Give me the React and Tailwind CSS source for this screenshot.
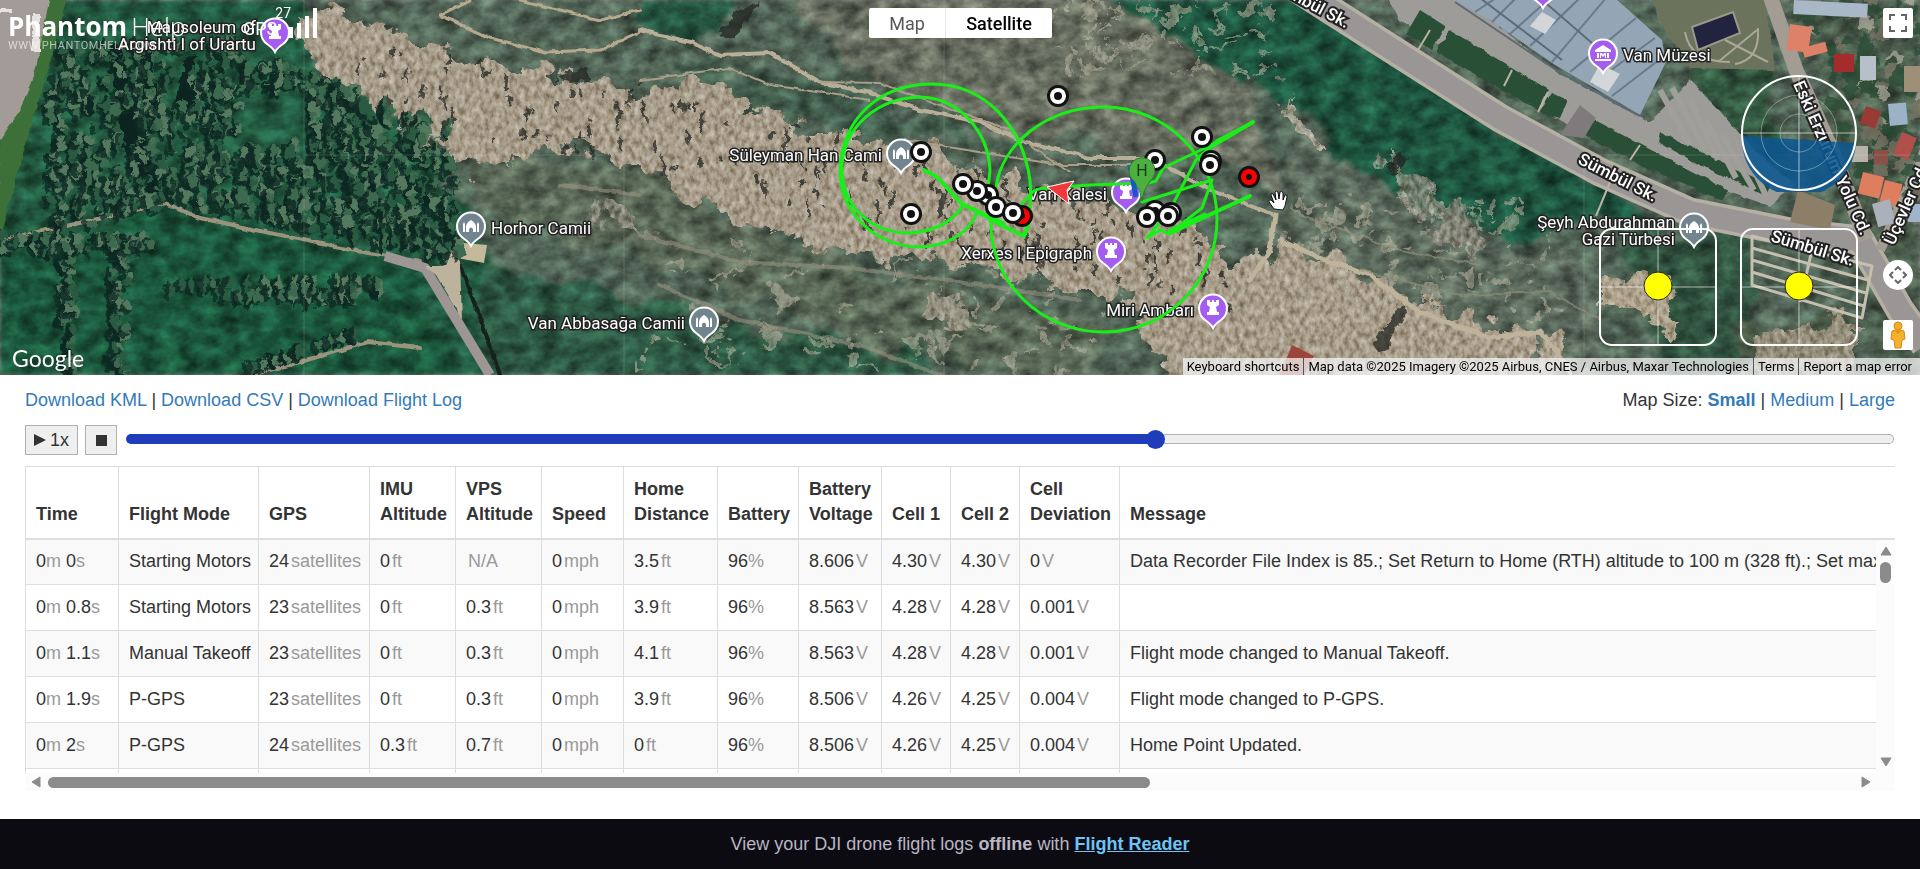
import React, { useState } from 'react';

const COLUMNS = [
  { label: 'Time', width: 'w-[93px]' },
  { label: 'Flight Mode', width: 'w-[140px]' },
  { label: 'GPS', width: 'w-[111px]' },
  { label: 'IMU Altitude', width: 'w-[86px]' },
  { label: 'VPS Altitude', width: 'w-[86px]' },
  { label: 'Speed', width: 'w-[82px]' },
  { label: 'Home Distance', width: 'w-[94px]' },
  { label: 'Battery', width: 'w-[81px]' },
  { label: 'Battery Voltage', width: 'w-[83px]' },
  { label: 'Cell 1', width: 'w-[69px]' },
  { label: 'Cell 2', width: 'w-[69px]' },
  { label: 'Cell Deviation', width: 'w-[100px]' },
  { label: 'Message', width: '' },
];

const ROWS = [
  { s: '0', mode: 'Starting Motors', sats: 24, imu: '0', vps: null, dist: '3.5', volt: '8.606', c1: '4.30', c2: '4.30', dev: '0', msg: 'Data Recorder File Index is 85.; Set Return to Home (RTH) altitude to 100 m (328 ft).; Set maximum' },
  { s: '0.8', mode: 'Starting Motors', sats: 23, imu: '0', vps: '0.3', dist: '3.9', volt: '8.563', c1: '4.28', c2: '4.28', dev: '0.001', msg: '' },
  { s: '1.1', mode: 'Manual Takeoff', sats: 23, imu: '0', vps: '0.3', dist: '4.1', volt: '8.563', c1: '4.28', c2: '4.28', dev: '0.001', msg: 'Flight mode changed to Manual Takeoff.' },
  { s: '1.9', mode: 'P-GPS', sats: 23, imu: '0', vps: '0.3', dist: '3.9', volt: '8.506', c1: '4.26', c2: '4.25', dev: '0.004', msg: 'Flight mode changed to P-GPS.' },
  { s: '2', mode: 'P-GPS', sats: 24, imu: '0.3', vps: '0.7', dist: '0', volt: '8.506', c1: '4.26', c2: '4.25', dev: '0.004', msg: 'Home Point Updated.' },
];

const PLACES = [
  { lines: ['Mausoleum of', 'Argishti I of Urartu'], x: 275, y: 32, side: 'left', kind: 'castle' },
  { lines: ['Horhor Camii'], x: 471, y: 226, side: 'right', kind: 'mosque' },
  { lines: ['Van Abbasağa Camii'], x: 704, y: 321, side: 'left', kind: 'mosque' },
  { lines: ['Süleyman Han Cami'], x: 901, y: 153, side: 'left', kind: 'mosque' },
  { lines: ['Xerxes I Epigraph'], x: 1111, y: 251, side: 'left', kind: 'castle' },
  { lines: ['Miri Ambarı'], x: 1213, y: 308, side: 'left', kind: 'castle' },
  { lines: ['Van Kalesi'], x: 1126, y: 192, side: 'left', kind: 'castle' },
  { lines: ['Van Müzesi'], x: 1603, y: 53, side: 'right', kind: 'museum' },
  { lines: [], x: 1543, y: -12, side: 'right', kind: 'museum' },
  { lines: ['Şeyh Abdurahman', 'Gazi Türbesi'], x: 1694, y: 227, side: 'left', kind: 'mosque' },
];

const WAYPOINTS = [
  [1058, 96], [921, 152], [911, 214], [988, 195], [977, 191], [963, 184], [996, 207],
  [1022, 216, true], [1013, 213], [1155, 160], [1202, 137], [1211, 161], [1210, 165],
  [1249, 177, true], [1155, 211], [1147, 217], [1171, 213], [1168, 216],
];

// Small seeded generator so the tree cover is the same on every render
const scatter = (seed, count, place) => {
  let n = seed;
  const rnd = () => {
    n = (n * 16807) % 2147483647;
    return n / 2147483647;
  };
  return Array.from({ length: count }, () => place(rnd));
};

const FOREST = scatter(71, 900, (r) => {
  const x = 50 + r() * 410;
  const top = x < 250 ? 42 : 50 + (x - 250) * 0.38;
  const bottom = x < 165 ? 235 - (x - 50) * 0.25 : 200 + (x - 165) * 0.2;
  const y = top + r() * (bottom - top);
  return { x, y, rx: 3 + r() * 3, ry: 4 + r() * 7, tone: r() };
}).filter((t) => t.x + t.y * 0.35 > 80 && !(t.x > 240 && t.x < 310 && t.y > 90 && t.y < 145));

const HEDGES = [
  ...scatter(12, 60, (r) => ({ x: 172 + r() * 212, y: 280 + r() * 18, rx: 4, ry: 9, tone: r() })),
  ...scatter(33, 50, (r) => ({ x: 62 + r() * 14, y: 245 + r() * 130, rx: 5, ry: 7, tone: r() })),
  ...scatter(45, 50, (r) => ({ x: 112 + r() * 18, y: 235 + r() * 140, rx: 5, ry: 7, tone: r() })),
  ...scatter(58, 36, (r) => { const k = r(); return { x: 250 + k * 110, y: 368 - k * 36, rx: 4, ry: 8, tone: r() }; }),
  ...scatter(91, 50, (r) => ({ x: r() * 160, y: 236 + r() * 14, rx: 5, ry: 8, tone: r() })),
];

const CREVICES = scatter(204, 190, (r) => {
  const x = 330 + r() * 900;
  const mid = x < 640 ? 75 + (x - 330) * 0.13 : 125 + (x - 640) * 0.24;
  return { x, y: mid + (r() - 0.5) * 80, w: r() * 2, h: 3 + r() * 11 };
});

const ROOFS = [
  [1790, 24, 22, 26, '#dd8168', 8], [1802, 48, 24, 10, '#dd8168', -15], [1834, 54, 20, 18, '#a52c2c', 0],
  [1860, 56, 16, 24, '#b7bfc9', 0], [1866, 106, 16, 18, '#9a3a34', 20], [1888, 104, 18, 22, '#9cb2c6', -5],
  [1902, 132, 16, 24, '#b0504a', 22], [1863, 172, 22, 22, '#df7d5f', 14], [1885, 180, 18, 22, '#df7d5f', 14],
  [1872, 204, 18, 24, '#aab1bb', -15], [1794, 0, 74, 14, '#a9b8c6', 3], [1874, 150, 14, 14, '#8a5048', 0],
  [1908, 204, 14, 18, '#9fb4cc', 0], [1852, 146, 16, 16, '#b8b3aa', 0], [1904, 66, 18, 26, '#9e8f78', 0],
];

const Tree = ({ t }) => (
  <g>
    <ellipse cx={t.x - 4} cy={t.y + 2} rx={t.rx} ry={t.ry} fill="#0d2722" opacity="0.75" />
    <ellipse cx={t.x} cy={t.y} rx={t.rx - 1} ry={t.ry - 2} fill={t.tone > 0.6 ? '#55795f' : t.tone > 0.3 ? '#3d694f' : '#2a5a41'} />
  </g>
);

const Terrain = () => (
  <g>
    <defs>
      <filter id="ground" x="0" y="0" width="1920" height="375" filterUnits="userSpaceOnUse" colorInterpolationFilters="sRGB">
        <feTurbulence type="fractalNoise" baseFrequency="0.02" numOctaves="5" seed="4" result="warp" />
        <feDisplacementMap in="SourceGraphic" in2="warp" scale="50" xChannelSelector="R" yChannelSelector="G" result="shape" />
        <feGaussianBlur in="shape" stdDeviation="2" result="soft" />
        <feTurbulence type="fractalNoise" baseFrequency="0.05 0.07" numOctaves="5" seed="9" />
        <feColorMatrix values="0.6 0 0 0 0.18  0.6 0 0 0 0.18  0.6 0 0 0 0.18  0 0 0 0 1" result="grain" />
        <feBlend in="grain" in2="soft" mode="overlay" />
      </filter>
      <filter id="rock" x="0" y="0" width="1920" height="375" filterUnits="userSpaceOnUse" colorInterpolationFilters="sRGB">
        <feTurbulence type="fractalNoise" baseFrequency="0.04" numOctaves="5" seed="2" result="warp" />
        <feDisplacementMap in="SourceGraphic" in2="warp" scale="50" xChannelSelector="R" yChannelSelector="G" result="shape" />
        <feTurbulence type="fractalNoise" baseFrequency="0.2 0.13" numOctaves="4" seed="21" />
        <feColorMatrix values="1.2 0 0 0 -0.08  1.2 0 0 0 -0.08  1.2 0 0 0 -0.08  0 0 0 0 1" result="grain" />
        <feBlend in="grain" in2="shape" mode="soft-light" />
        <feComposite operator="in" in2="shape" />
      </filter>
      <filter id="leaf" x="0" y="0" width="1920" height="375" filterUnits="userSpaceOnUse" colorInterpolationFilters="sRGB">
        <feTurbulence type="fractalNoise" baseFrequency="0.12" numOctaves="3" seed="6" result="warp" />
        <feDisplacementMap in="SourceGraphic" in2="warp" scale="12" xChannelSelector="R" yChannelSelector="G" />
      </filter>
      <filter id="worn" x="0" y="0" width="1920" height="375" filterUnits="userSpaceOnUse" colorInterpolationFilters="sRGB">
        <feTurbulence type="fractalNoise" baseFrequency="0.08" numOctaves="3" seed="8" result="warp" />
        <feDisplacementMap in="SourceGraphic" in2="warp" scale="5" xChannelSelector="R" yChannelSelector="G" />
      </filter>
    </defs>

    <rect width="1920" height="375" fill="#425c4c" />
    {/* Grass and fields */}
    <g filter="url(#ground)">
      <rect x="-40" y="-40" width="2000" height="460" fill="#55695a" />
      <path d="M-40 -40H290L330 90L440 160L470 260L510 420H-40Z" fill="#235c42" />
      <path d="M0 250L165 210L420 270L470 420H-40V250Z" fill="#1c5a3e" />
      <path d="M470 260L620 290L760 330L900 350L1000 420H500Z" fill="#2f5c46" />
      <path d="M460 150L640 170L800 250L960 290L1100 320L1100 390L860 340L640 260L470 210Z" fill="#5e6d5b" />
      <path d="M640 -20H755L720 35L640 28Z" fill="#265742" />
      <path d="M780 -20H1090L1250 90L1290 190L1180 160L1000 130L860 80Z" fill="#6c7264" />
      <path d="M660 60L860 90L1000 150L900 130L740 110Z" fill="#44604f" />
      <path d="M1090 -20H1300L1400 60L1520 140L1650 215L1540 235L1450 220L1350 170L1280 100L1180 50Z" fill="#1f5842" />
      <path d="M1290 130L1390 190L1500 240L1600 260L1600 375H1400L1290 240Z" fill="#5f6e60" />
      <path d="M1600 220L1750 230L1760 400H1680L1640 300Z" fill="#345843" />
      <path d="M1660 0H1760L1790 180L1700 110Z" fill="#355b43" />
      <path d="M1740 330L1860 320L1850 400H1750Z" fill="#4d5e4b" />
      <path d="M1790 -20H1960V400H1890L1830 200Z" fill="#4e6150" />
    </g>

    {/* Rock face */}
    <g filter="url(#rock)">
      <path d="M290 10L370 20L460 55L560 75L650 95L710 80L790 125L910 145L1000 180L1110 205L1180 215L1230 260L1300 250L1400 290L1500 330L1560 345V420H1190L1130 300L1060 285L920 258L820 250L700 205L640 165L560 145L480 170L430 145L390 120L330 95Z" fill="#a69b88" />
      <path d="M1380 155L1410 170L1470 220L1480 260L1440 230L1400 200Z" fill="#9a937f" opacity="0.7" />
      <path d="M1600 285L1660 275L1680 330L1600 310Z" fill="#aca08a" />
      <path d="M1760 340L1860 320V400H1750Z" fill="#918b77" />
      <path d="M1280 95L1330 150L1300 140Z" fill="#a3a08e" />
      <path d="M930 290L965 300L960 330L935 325Z" fill="#a59b87" opacity="0.8" />
      <path d="M590 200L640 212L640 235L580 220Z" fill="#8f8874" opacity="0.7" />
    </g>
    <g filter="url(#rock)" fill="#aba894" opacity="0.6">
      {scatter(640, 70, (r) => ({ x: 1060 + r() * 210, y: r() * 90, w: 2 + r() * 7, h: 2 + r() * 9 })).map((c, i) => (
        <ellipse key={i} cx={c.x} cy={c.y * (c.x / 1400)} rx={c.w} ry={c.h / 2} />
      ))}
      {scatter(311, 70, (r) => ({ x: 640 + r() * 500, y: 250 + r() * 120, w: 3 + r() * 10, h: 2 + r() * 3 })).map((c, i) => (
        <ellipse key={i} cx={c.x} cy={c.y} rx={c.w} ry={c.h} />
      ))}
      {scatter(877, 60, (r) => ({ x: 1290 + r() * 270, y: 190 + r() * 120, w: 2 + r() * 7, h: 2 + r() * 4 })).map((c, i) => (
        <ellipse key={i} cx={c.x} cy={c.y} rx={c.w} ry={c.h} />
      ))}
    </g>
    <g filter="url(#leaf)" fill="#232522" opacity="0.75">
      {CREVICES.map((c, i) => (
        <path key={i} d={`M${c.x} ${c.y}l${c.w + 2} ${c.h / 3}l${-c.w} ${c.h}l${-c.w - 2} ${-c.h / 4}Z`} />
      ))}
      <path d="M718 38L735 12L762 0L752 14L735 36Z M560 75L585 68L592 80L570 82Z M938 188L946 195L944 215L934 222L940 205Z M1385 170L1400 152L1408 158L1392 175Z M1372 345L1402 305L1406 312L1384 352Z M614 98L622 115L618 132Z" />
    </g>

    {/* Footpaths */}
    <g filter="url(#worn)" fill="none" strokeLinecap="round">
      <path d="M640 30L690 42L720 55L770 53L820 82L870 93L920 110L980 122L1025 142L1090 158L1150 158L1210 190L1275 215" stroke="#b9ae98" strokeWidth="4" />
      <path d="M820 82L880 83L960 112L1010 130L1050 160L1070 172M905 140L1060 165L1130 165M640 80L730 68L770 85L870 100" stroke="#a89e89" strokeWidth="2" />
      <path d="M1275 215L1270 250L1250 280M1280 240L1320 258L1370 275L1420 312L1490 338L1540 332L1560 355L1570 375" stroke="#bfb39c" strokeWidth="5" />
      <path d="M440 15L470 0M440 15L490 38L545 52L600 50L640 32M520 0L600 20L640 10" stroke="#b7a98e" strokeWidth="3" />
      <path d="M640 235L740 262L850 268L980 285L1080 300M660 285L740 320L860 345L940 375M560 185L640 195" stroke="#989280" strokeWidth="4" opacity="0.6" />
      <path d="M0 240L85 222L165 203L200 218L280 235L340 248L420 262M250 375L300 362L368 342L420 348" stroke="#9b937e" strokeWidth="4" />
      <path d="M1360 270L1460 295L1550 292L1600 320M1300 215L1400 250L1480 265" stroke="#8f8d79" strokeWidth="2" opacity="0.7" />
      <path d="M460 265L490 345L500 375" stroke="#16211b" strokeWidth="4" />
    </g>
    <path d="M385 256L425 268L490 375" fill="none" stroke="#9d9693" strokeWidth="10" strokeLinejoin="round" />
    <path d="M448 250L460 262L462 320L436 275L424 265L444 265Z" fill="#bdb29c" filter="url(#worn)" />
    <path d="M453 242L487 245L484 263L452 257Z" fill="#c5b99d" />

    {/* Car park and orchard */}
    <g filter="url(#worn)">
      <path d="M48 0H66L48 70L24 150L0 240V140L34 66Z" fill="#3d7038" />
      <path d="M-4 -4H50L36 68L20 110L-4 146Z" fill="#a39b97" />
      <path d="M32 14H40V52H32Z M0 9H12V13H0Z" fill="#e5e2df" />
    </g>
    <g filter="url(#leaf)">
      <path d="M108 45L122 45L138 130L160 190L148 195L125 150Z M140 40L152 40L158 110L148 120Z M185 60L196 55L190 120L176 100Z" fill="#0d2320" />
      {FOREST.map((t, i) => <Tree key={i} t={t} />)}
      {HEDGES.map((t, i) => <Tree key={i} t={t} />)}
    </g>

    {/* Museum grounds */}
    <g filter="url(#worn)">
      <path d="M1385 -5H1460L1560 75L1650 122L1690 80L1720 110L1745 140L1795 185L1770 206L1650 165L1560 120L1400 20Z" fill="#9e9c98" />
      <path d="M1420 10L1445 26L1432 50L1406 34Z M1450 30L1548 90L1538 110L1436 52Z M1552 92L1568 100L1560 118L1540 112Z M1590 118L1680 165L1728 190L1722 200L1640 165L1585 135Z M1660 132L1770 185L1765 195L1700 165L1658 142Z" fill="#294f36" />
      <path d="M1650 -5H1765L1775 70L1690 68L1665 30Z" fill="#6c735d" />
    </g>
    <path d="M1452 -2H1615L1662 40L1666 62L1640 115L1598 90L1555 65L1490 20Z" fill="#94a5b6" />
    <path d="M1475 12L1496 -2M1492 22L1516 -2M1510 34L1550 -2M1530 46L1580 -2M1552 62L1606 -2M1570 72L1636 18M1592 84L1655 38M1612 96L1664 56" stroke="#687a8c" strokeWidth="2" />
    <path d="M1480 -2L1562 60M1540 -2L1600 50M1455 2L1556 70L1640 116" stroke="#5d6a76" strokeWidth="2" fill="none" />
    <path d="M1542 12L1556 20L1545 34L1530 26Z M1600 64L1620 74L1608 92L1590 82Z" fill="#d3d6d8" />
    <path d="M1692 27L1733 12L1740 33L1698 50Z" fill="#22233e" stroke="#9a9a8a" strokeWidth="2" />
    <path d="M1685 32Q1690 62 1730 62M1725 40L1768 62M1757 30L1718 62M1758 28Q1760 60 1735 64" stroke="#aaa798" strokeWidth="2" fill="none" />
    <g stroke="#a19f99" strokeWidth="6">
      <path d="M1660 90L1690 145M1672 88L1706 150M1690 100L1718 160M1706 120L1736 178M1722 135L1754 190M1745 150L1766 196" />
    </g>

    {/* Roads */}
    <g fill="none" strokeLinejoin="round">
      <path d="M1290 -16L1390 48L1500 118L1600 172L1690 212L1790 232L1860 240L1900 310L1925 345" stroke="#b5afa4" strokeWidth="29" />
      <path d="M1290 -16L1390 48L1500 118L1600 172L1690 212L1790 232L1860 240L1900 310L1925 345" stroke="#9a9695" strokeWidth="22" />
      <path d="M1768 -10L1796 70L1832 150L1866 240" stroke="#a29c92" strokeWidth="15" />
      <path d="M1925 150L1880 250" stroke="#a29c92" strokeWidth="10" />
      <path d="M1560 135L1580 105L1596 118L1584 138Z" fill="#7f7b7d" />
      <path d="M1610 182L1596 216M1430 30L1418 50M1512 70L1504 86M1548 92L1538 112M1640 145L1630 160" stroke="#b8b4a6" strokeWidth="2" />
      <path d="M1752 236L1872 266L1862 318L1752 285ZM1752 248L1868 280M1752 260L1866 293M1752 272L1864 306M1812 250L1800 302" stroke="#c4bfae" strokeWidth="3" />
    </g>
    <g filter="url(#leaf)" opacity="0.7">
      {scatter(503, 160, (r) => ({ x: 1800 + r() * 120, y: r() * 220, s: 3 + r() * 6, tone: r() }))
        .filter((b) => b.x > 1796 + b.y * 0.36)
        .map((b, i) => (
          <circle key={i} cx={b.x} cy={b.y} r={b.s} fill={b.tone > 0.45 ? '#274a33' : b.tone > 0.2 ? '#7d7565' : '#b3ada0'} />
        ))}
    </g>
    {ROOFS.map(([x, y, w, h, fill, turn], i) => (
      <rect key={i} x={x} y={y} width={w} height={h} fill={fill} transform={`rotate(${turn} ${x} ${y})`} />
    ))}
    <path d="M1292 345L1314 356L1304 375H1280Z" fill="#9c453b" />
    <path d="M1798 190L1835 205L1830 230L1790 222Z" fill="#8d7f67" />
    <path d="M304 0V375M624 130V375M944 0V375M1584 155V375M304 155H624M1584 155H1920" stroke="#ffffff" strokeOpacity="0.14" />
  </g>
);

const PlaceIcon = ({ kind }) => {
  if (kind === 'mosque') {
    return <path d="M-8 6V-2L-7 -4L-6 -2V6ZM6 6V-2L7 -4L8 -2V6ZM-5 6V1Q-5 -3 0 -6Q5 -3 5 1V6H2V3Q0 0 -2 3V6Z" fill="#fff" />;
  }
  if (kind === 'museum') {
    return <path d="M-8 -3L0 -8L8 -3V-1H-8ZM-6 0H-4V5H-6ZM4 0H6V5H4ZM-8 6H8V8H-8ZM-3 5V0H-1L0 2L1 0H3V5H2V2L0 4L-2 2V5Z" fill="#fff" />;
  }
  return <path d="M-6 -8H-3V-6H-1V-8H1V-6H3V-8H6V-3L3 -1L4 4H6V7H-6V4H-4L-3 -1L-6 -3Z" fill="#fff" />;
};

const Place = ({ place }) => {
  const left = place.side === 'left';
  const double = place.lines.length === 2;
  return (
    <g transform={`translate(${place.x} ${place.y})`}>
      <path d="M0 20Q-2 16 -8 12A14 14 0 1 1 8 12Q2 16 0 20Z" fill={place.kind === 'mosque' ? '#72858f' : '#a55cf0'} stroke="#fff" strokeWidth="2" />
      <PlaceIcon kind={place.kind} />
      {place.lines.map((line, i) => (
        <text
          key={line}
          x={left ? -19 : 20}
          y={double ? 1 + i * 17 : 8}
          textAnchor={left ? 'end' : 'start'}
          className="fill-white stroke-[#222] stroke-3 text-[17px] [paint-order:stroke]"
        >
          {line}
        </text>
      ))}
    </g>
  );
};

const FlightPath = () => (
  <g fill="none" stroke="#19ee19" strokeWidth="3" strokeLinecap="round" strokeLinejoin="round">
    <path d="M1145 183L1090 185L1047 188Q1035 188 1031 194L1021 205" />
    <path d="M996 187C1002 145 1045 107 1104 107C1166 107 1217 158 1217 219C1217 281 1167 332 1104 332C1041 332 989 282 991 220" />
    <path d="M977 213C967 236 943 247 918 247C873 245 840 212 840 170C842 118 880 84 932 84C985 84 1022 125 1030 180C1032 205 1030 222 1024 236" />
    <path d="M963 206C950 224 930 233 905 233C868 231 841 204 842 166C844 126 878 98 920 97C958 98 988 130 990 170L988 190" />
    <path d="M924 170L937 177L962 204L980 213L1003 226L1024 236L1028 226M962 204L1003 223" strokeWidth="4" />
    <path d="M1253 122L1207 147L1163 168L1156 181L1145 184M1253 122L1218 140L1196 160L1174 202" />
    <path d="M1212 180L1142 202M1212 180L1202 208L1170 233M1250 196L1170 234L1160 230L1147 238L1160 222M1170 230L1205 214" />
    <path d="M1253 122L1207 149M1250 196L1170 233" strokeWidth="4" />
  </g>
);

const MapCanvas = () => (
  <svg viewBox="0 0 1920 375" preserveAspectRatio="xMidYMid slice" className="block h-[375px] w-full font-['Roboto',sans-serif]" role="img" aria-label="Satellite map with flight path">
    <Terrain />
    {PLACES.map((p) => <Place key={`${p.x}-${p.y}`} place={p} />)}
    <g className="fill-white stroke-[#222] stroke-4 text-[17px] font-medium [paint-order:stroke]">
      <text transform="translate(1270 -12) rotate(28)">Sümbül Sk.</text>
      <text transform="translate(1577 163) rotate(27)">Sümbül Sk.</text>
      <text transform="translate(1770 241) rotate(17)">Sümbül Sk.</text>
      <text transform="translate(1793 84) rotate(66)">Eski Erzurum Yolu Cd.</text>
      <text transform="translate(1894 246) rotate(-66)">Üçevler Cd.</text>
    </g>
    <FlightPath />
    <path d="M1130 165L1136 197" stroke="#1558c8" strokeWidth="5" />
    {WAYPOINTS.map(([x, y, red], i) => (
      <g key={i} transform={`translate(${x} ${y})`}>
        <circle r="11" fill="#111" />
        <circle r="8" fill={red ? '#ff0000' : '#fff'} />
        <circle r={red ? 3 : 4} fill="#111" />
      </g>
    ))}
    <path d="M1142 201Q1141 190 1134 181A13 13 0 1 1 1150 181Q1143 190 1142 201Z" fill="#4caf3f" stroke="#2c7a2a" />
    <text x="1142" y="176" textAnchor="middle" className="fill-[#163d16] text-[16px]">H</text>
    <path d="M1047 187L1074 181L1067 190L1069 204Z" fill="#f2383a" stroke="#fff" strokeWidth="1" />
    {/* Grab cursor */}
    <path d="M1274 209L1269 202Q1268 199 1271 200L1274 203L1271 195Q1271 192 1273 194L1276 200L1275 192Q1276 190 1278 192L1279 199L1280 192Q1282 190 1283 193V200L1285 195Q1287 194 1287 197L1285 206L1283 210Z" fill="#fff" stroke="#111" />
  </svg>
);

const StickBox = ({ label }) => (
  <svg viewBox="0 0 118 118" className="h-[118px] w-[118px]" role="img" aria-label={label}>
    <path d="M59 1V117M1 59H117" stroke="#fff" strokeOpacity="0.6" />
    <rect x="1" y="1" width="116" height="116" rx="12" fill="none" stroke="#fff" strokeWidth="2" />
    <circle cx="59" cy="58" r="14" fill="#ffff00" stroke="#222" />
  </svg>
);

const Attitude = () => (
  <svg viewBox="0 0 118 118" className="h-[118px] w-[118px]" role="img" aria-label="Aircraft attitude">
    <path d="M2 62L116 69A57 57 0 0 1 2 62Z" fill="#0d5790" fillOpacity="0.88" />
    <g fill="none" stroke="#fff" strokeOpacity="0.35">
      <circle cx="59" cy="59" r="19" />
      <circle cx="59" cy="59" r="38" />
    </g>
    <path d="M59 2V116M2 59H116" stroke="#fff" strokeOpacity="0.6" />
    <circle cx="59" cy="59" r="57" fill="none" stroke="#fff" strokeWidth="2" />
  </svg>
);

const FlightMap = () => (
  <div className="relative overflow-hidden font-['Roboto',sans-serif]">
    <MapCanvas />

    {/* Branding and signal */}
    <div className="absolute left-2 top-3 text-white">
      <div className="flex items-baseline gap-1 text-[26px] leading-[28px]">
        <span className="font-['Open_Sans',sans-serif] font-bold">Phantom</span>
        <span className="font-['Open_Sans',sans-serif] font-light">Help</span>
      </div>
      <div className="text-[11px] leading-[12px] tracking-wider opacity-60">WWW.PHANTOMHELP.COM</div>
    </div>
    <div className="absolute left-[243px] top-2 flex h-[30px] items-end text-white">
      <span className="text-[18px] leading-[18px]">GPS</span>
      <span className="-ml-0.5 self-start text-[14px] leading-[10px]">27</span>
      <svg viewBox="0 0 28 30" className="-ml-0.5 h-[30px] w-7">
        <path d="M0 19H4V30H0ZM8 15H12V30H8ZM16 8H20V30H16ZM24 0H28V30H24Z" fill="#fff" />
      </svg>
    </div>

    {/* Map type */}
    <div className="absolute left-[869px] top-2 flex h-[30px] overflow-hidden rounded-xs bg-white text-[18px] shadow">
      <button className="w-[77px] border-r border-gray-200 text-[#565656]">Map</button>
      <button className="w-[106px] font-medium text-black">Satellite</button>
    </div>

    <button aria-label="Toggle fullscreen view" className="absolute right-[7px] top-2 flex h-[30px] w-[30px] items-center justify-center rounded-xs bg-white">
      <svg viewBox="0 0 18 18" className="h-[18px] w-[18px]" fill="none" stroke="#666" strokeWidth="2">
        <path d="M1 6V1H6M12 1H17V6M17 12V17H12M6 17H1V12" />
      </svg>
    </button>

    <div className="absolute right-[62px] top-[74px]"><Attitude /></div>
    <div className="absolute right-[62px] top-[228px] flex gap-[23px]">
      <StickBox label="Left stick" />
      <StickBox label="Right stick" />
    </div>

    <button aria-label="Map camera controls" className="absolute right-[7px] top-[260px] flex h-[30px] w-[30px] items-center justify-center rounded-full bg-white">
      <svg viewBox="0 0 18 18" className="h-[18px] w-[18px]" fill="none" stroke="#666" strokeWidth="2">
        <path d="M6 4L9 1L12 4M6 14L9 17L12 14M4 6L1 9L4 12M14 6L17 9L14 12" />
      </svg>
    </button>
    <button aria-label="Street View" className="absolute right-[7px] top-[320px] flex h-[30px] w-[30px] items-center justify-center rounded-xs bg-white">
      <svg viewBox="0 0 18 28" className="h-7 w-[18px]">
        <path d="M3 10Q9 7 15 10L16 18L13 19L12 27H6L5 19L2 18Z" fill="#f4b12b" stroke="#d18a17" />
        <circle cx="9" cy="5" r="4" fill="#f9a825" stroke="#d18a17" />
        <path d="M6 10L9 13L12 10" fill="#e58f12" />
      </svg>
    </button>

    <div className="absolute bottom-1 left-3 font-['Lato',sans-serif] text-[23px] leading-[26px] text-white">Google</div>
    <div className="absolute bottom-0 right-0 flex h-[17px] items-center divide-x divide-gray-600 bg-[#f5f5f5]/75 pr-1 text-[13px] leading-[17px] text-black">
      <button className="px-1">Keyboard shortcuts</button>
      <span className="px-1">Map data ©2025 Imagery ©2025 Airbus, CNES / Airbus, Maxar Technologies</span>
      <a href="#terms" className="px-1">Terms</a>
      <a href="#report" className="px-1">Report a map error</a>
    </div>
  </div>
);

const Unit = ({ children, tight }) => (
  <span className={tight ? 'text-[#999]' : 'ml-0.5 text-[#999]'}>{children}</span>
);

const FlightTable = () => (
  <div className="relative mt-[11px]">
    <div className="h-[307px] overflow-hidden">
      <table className="w-[3076px] table-fixed border-collapse text-left leading-[25px]">
        <thead>
          <tr className="h-[72px] align-bottom">
            {COLUMNS.map((c) => (
              <th key={c.label} className={`${c.width} border border-b-2 border-[#ddd] px-[10px] pb-[11px] font-bold`}>
                <div className="w-min">{c.label === 'Flight Mode' || c.label.startsWith('Cell ') && c.label.length === 6 ? <span className="whitespace-nowrap">{c.label}</span> : c.label}</div>
              </th>
            ))}
          </tr>
        </thead>
        <tbody>
          {ROWS.map((r) => (
            <tr key={r.s} className="h-[46px] whitespace-nowrap odd:bg-[#f9f9f9] [&>td]:border [&>td]:border-[#ddd] [&>td]:px-[10px]">
              <td>0<Unit tight>m</Unit> {r.s}<Unit tight>s</Unit></td>
              <td>{r.mode}</td>
              <td>{r.sats}<Unit>satellites</Unit></td>
              <td>{r.imu}<Unit>ft</Unit></td>
              <td>{r.vps ? <>{r.vps}<Unit>ft</Unit></> : <Unit>N/A</Unit>}</td>
              <td>0<Unit>mph</Unit></td>
              <td>{r.dist}<Unit>ft</Unit></td>
              <td>96<Unit tight>%</Unit></td>
              <td>{r.volt}<Unit>V</Unit></td>
              <td>{r.c1}<Unit>V</Unit></td>
              <td>{r.c2}<Unit>V</Unit></td>
              <td>{r.dev}<Unit>V</Unit></td>
              <td>{r.msg}</td>
            </tr>
          ))}
          <tr className="h-[46px] [&>td]:border [&>td]:border-[#ddd]">
            {COLUMNS.map((c) => <td key={c.label} />)}
          </tr>
        </tbody>
      </table>
    </div>

    {/* Vertical scrollbar lies over the rows */}
    <div className="absolute bottom-[18px] right-0 top-[74px] flex w-[19px] flex-col items-center bg-[#fcfcfc] pb-1.5 pt-1.5">
      <svg viewBox="0 0 12 10" className="h-[10px] w-3"><path d="M6 1L11 9H1Z" fill="#8b8b8b" stroke="#8b8b8b" strokeLinejoin="round" /></svg>
      <div className="mt-1.5 h-[21px] w-[11px] rounded-full bg-[#8b8b8b]" />
      <svg viewBox="0 0 12 10" className="mt-auto h-[10px] w-3"><path d="M6 9L11 1H1Z" fill="#8b8b8b" stroke="#8b8b8b" strokeLinejoin="round" /></svg>
    </div>
    <div className="flex h-[18px] items-center bg-[#fcfcfc] pl-1.5 pr-6">
      <svg viewBox="0 0 10 12" className="h-3 w-[10px]"><path d="M1 6L9 1V11Z" fill="#8b8b8b" stroke="#8b8b8b" strokeLinejoin="round" /></svg>
      <div className="mx-[7px] flex-1">
        <div className="h-[11px] w-[61%] rounded-full bg-[#8b8b8b]" />
      </div>
      <svg viewBox="0 0 10 12" className="h-3 w-[10px]"><path d="M9 6L1 1V11Z" fill="#8b8b8b" stroke="#8b8b8b" strokeLinejoin="round" /></svg>
    </div>
  </div>
);

const App = () => {
  const [position, setPosition] = useState(583);
  const pct = position / 10;
  const track = {
    background: `linear-gradient(to right, #1f3cbb ${pct}%, #efefef ${pct}%) padding-box, linear-gradient(to right, #1f3cbb ${pct}%, #b2b2b2 ${pct}%) border-box`,
  };

  return (
    <div className="flex min-h-screen flex-col bg-white font-['Liberation_Sans',Arial,sans-serif] text-[18px] text-[#333]">
      <FlightMap />

      <main className="flex-1 px-[25px]">
        <div className="mt-3 flex justify-between leading-[26px]">
          <div>
            <a href="#kml" className="text-[#337ab7]">Download KML</a> | <a href="#csv" className="text-[#337ab7]">Download CSV</a> | <a href="#log" className="text-[#337ab7]">Download Flight Log</a>
          </div>
          <div>
            Map Size: <a href="#small" className="font-bold text-[#337ab7]">Small</a> | <a href="#medium" className="text-[#337ab7]">Medium</a> | <a href="#large" className="text-[#337ab7]">Large</a>
          </div>
        </div>

        <div className="mt-3 flex h-[30px] items-center">
          <button className="flex h-[30px] w-[53px] items-center justify-center gap-1 border border-[#b0b0b0] bg-[#efefef]">
            <svg viewBox="0 0 12 12" className="h-3 w-3"><path d="M0 0L12 6L0 12Z" fill="#333" /></svg>
            1x
          </button>
          <button aria-label="Stop" className="ml-[7px] flex h-[30px] w-8 items-center justify-center border border-[#b0b0b0] bg-[#efefef]">
            <span className="h-[11px] w-[11px] bg-[#333]" />
          </button>
          <input
            type="range"
            min="0"
            max="1000"
            value={position}
            onChange={(e) => setPosition(Number(e.target.value))}
            aria-label="Flight position"
            style={track}
            className="ml-[9px] mr-px mt-[-2px] h-[10px] flex-1 appearance-none rounded-full border border-transparent [&::-webkit-slider-thumb]:h-[19px] [&::-webkit-slider-thumb]:w-[19px] [&::-webkit-slider-thumb]:appearance-none [&::-webkit-slider-thumb]:rounded-full [&::-webkit-slider-thumb]:bg-[#1f3cbb]"
          />
        </div>

        <FlightTable />
      </main>

      <footer className="mt-7 flex h-[50px] items-center justify-center bg-[#0c0b12] text-[#b9b5c4]">
        <p>
          View your DJI drone flight logs <b>offline</b> with{' '}
          <a href="#reader" className="font-bold text-[#6cc5f5] underline">Flight Reader</a>
        </p>
      </footer>
    </div>
  );
};

export default App;
